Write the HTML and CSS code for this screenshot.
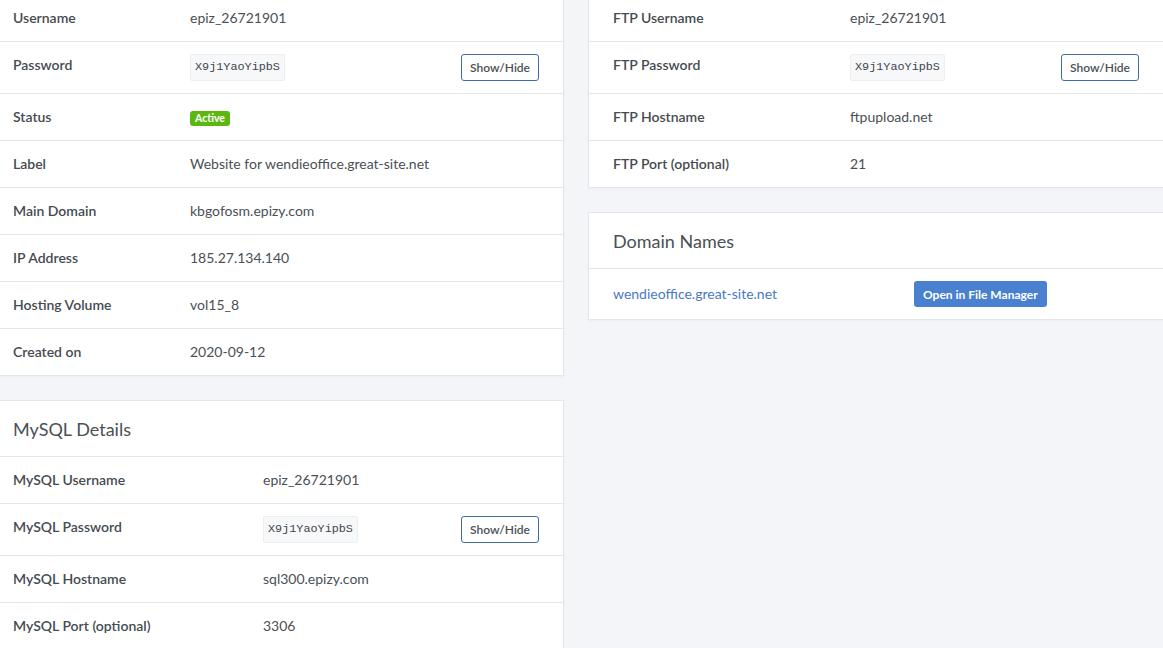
FILE: index.html
```html
<!DOCTYPE html>
<html lang="en">
<head>
<meta charset="utf-8">
<title>Account Details</title>
<link rel="stylesheet" href="styles.css">
</head>
<body>
<div class="page">
  <div class="col">
    <section class="card card-top">
      <div class="row row-a"><div class="lbl">Username</div><div class="val">epiz_26721901</div></div>
      <div class="row row-a"><div class="lbl">Password</div><div class="val split"><code class="pw">X9j1YaoYipbS</code><button class="btn-outline">Show/Hide</button></div></div>
      <div class="row row-a"><div class="lbl">Status</div><div class="val"><span class="badge">Active</span></div></div>
      <div class="row row-a"><div class="lbl">Label</div><div class="val">Website for wendieoffice.great-site.net</div></div>
      <div class="row row-a"><div class="lbl">Main Domain</div><div class="val">kbgofosm.epizy.com</div></div>
      <div class="row row-a"><div class="lbl">IP Address</div><div class="val">185.27.134.140</div></div>
      <div class="row row-a"><div class="lbl">Hosting Volume</div><div class="val">vol15_8</div></div>
      <div class="row row-a"><div class="lbl">Created on</div><div class="val">2020-09-12</div></div>
    </section>
    <section class="card">
      <h2 class="card-head">MySQL Details</h2>
      <div class="row row-m"><div class="lbl">MySQL Username</div><div class="val">epiz_26721901</div></div>
      <div class="row row-m"><div class="lbl">MySQL Password</div><div class="val split"><code class="pw">X9j1YaoYipbS</code><button class="btn-outline">Show/Hide</button></div></div>
      <div class="row row-m"><div class="lbl">MySQL Hostname</div><div class="val">sql300.epizy.com</div></div>
      <div class="row row-m"><div class="lbl">MySQL Port (optional)</div><div class="val">3306</div></div>
    </section>
  </div>
  <div class="col">
    <section class="card card-top">
      <div class="row row-f"><div class="lbl">FTP Username</div><div class="val">epiz_26721901</div></div>
      <div class="row row-f"><div class="lbl">FTP Password</div><div class="val split"><code class="pw">X9j1YaoYipbS</code><button class="btn-outline">Show/Hide</button></div></div>
      <div class="row row-f"><div class="lbl">FTP Hostname</div><div class="val">ftpupload.net</div></div>
      <div class="row row-f"><div class="lbl">FTP Port (optional)</div><div class="val">21</div></div>
    </section>
    <section class="card">
      <h2 class="card-head">Domain Names</h2>
      <div class="row row-d"><div class="lbl"><a class="link" href="#">wendieoffice.great-site.net</a></div><div class="val"><button class="btn-primary">Open in File Manager</button></div></div>
    </section>
  </div>
</div>
</body>
</html>
```

FILE: styles.css
```css
html, body {
  margin: 0;
  padding: 0;
}
body {
  background: #f4f5f9;
  font-family: "Lato", "Liberation Sans", sans-serif;
  font-size: 14px;
  color: #4a5056;
  overflow: hidden;
}
.page {
  display: grid;
  grid-template-columns: 576px 576px;
  column-gap: 24px;
  margin-left: -12px;
  margin-top: -6px;
}
.col {
  display: flex;
  flex-direction: column;
  gap: 24px;
}
.card {
  background: #fff;
  border: 1px solid #e4e6ea;
  box-shadow: 0 1px 2px rgba(0, 0, 0, 0.04);
}
.card-head {
  margin: 0;
  padding: 16px 24px 14px;
  line-height: 25px;
  font-size: 18px;
  font-weight: 400;
  color: #4a5056;
  border-bottom: 1px solid #e4e6ea;
}
.row {
  display: grid;
  align-items: center;
  padding: 12px 24px;
  min-height: 22px;
  line-height: 22px;
  border-bottom: 1px solid #e4e6ea;
}
.row:last-child {
  border-bottom: 0;
}
.row-a { grid-template-columns: 177px 1fr; }
.row-m { grid-template-columns: 250px 1fr; }
.row-f { grid-template-columns: 237px 1fr; }
.row-d { grid-template-columns: 301px 1fr; }
.lbl {
  font-weight: 600;
  color: #454b51;
  align-self: start;
}
.row-d .lbl { font-weight: 400; align-self: center; }
.val {
  color: #4a5056;
}
.split {
  display: flex;
  justify-content: space-between;
  align-items: center;
}
.pw {
  font-family: "Liberation Mono", "DejaVu Sans Mono", monospace;
  font-size: 11.8px;
  line-height: 25px;
  padding: 0 4px;
  background: #f7f8f9;
  border: 1px solid #eceef0;
  border-radius: 2px;
  color: #3f454b;
}
.btn-outline {
  font-family: inherit;
  font-size: 12px;
  font-weight: 600;
  height: 27px;
  padding: 0 8px;
  background: #fff;
  color: #4a5056;
  border: 1px solid #3f6aa8;
  border-radius: 3px;
}
.badge {
  display: inline-block;
  background: #5cb811;
  color: #fff;
  font-size: 10.5px;
  font-weight: 700;
  line-height: 15px;
  padding: 0 5px;
  border-radius: 3px;
  vertical-align: middle;
}
.link {
  color: #4a79c3;
  text-decoration: none;
}
.btn-primary {
  font-family: inherit;
  font-size: 12px;
  font-weight: 700;
  height: 26px;
  padding: 0 9px;
  background: #4a80d0;
  color: #fff;
  border: 0;
  border-radius: 3px;
}
```
